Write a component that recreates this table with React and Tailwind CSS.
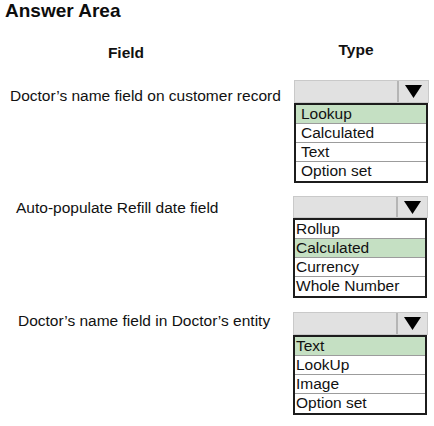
import React from "react";

function Dropdown({ options, selected, textPad, headerH, listOffset }) {
  return (
    <div className={`w-[135px] ${listOffset}`}>
      <div
        className={`flex ${headerH} bg-[#e1e1e1] border border-[#c9c9c9]`}
      >
        <div className="flex-1" />
        <div className="w-[31px] border-l-2 border-[#b5b5b5] flex items-center justify-center">
          <svg width="17" height="13" viewBox="0 0 17 13">
            <polygon points="0,0 17,0 8.5,13" fill="#000" />
          </svg>
        </div>
      </div>
      <div className="border-2 border-[#1c1c1c] w-[134px]">
        {options.map((o, i) => (
          <div
            key={o}
            className={`h-[19px] leading-[17px] ${textPad} text-[#111] ${
              i === selected ? "bg-[#c5e0c3]" : "bg-white"
            } ${i < options.length - 1 ? "border-b border-[#9c9c9c]" : ""}`}
          >
            {o}
          </div>
        ))}
      </div>
    </div>
  );
}

export default function App() {
  return (
    <div
      className="w-[434px] h-[426px] bg-white text-[15.5px] text-[#111]"
      style={{ fontFamily: '"Liberation Sans", Arial, sans-serif' }}
    >
      <div className="pl-[5px] text-[19px] font-bold leading-[21px] text-[#0d0d0d]">
        Answer Area
      </div>
      <div className="mt-[20px] grid grid-cols-[293px_1fr] font-bold leading-[18px]">
        <div className="pt-[3px] text-center w-[252px]">Field</div>
        <div className="w-[134px] text-center pr-[8px]">Type</div>
      </div>

      <div className="mt-[18px] grid grid-cols-[293px_1fr] leading-[18px]">
        <div className="pl-[10px] pt-[7px]">Doctor’s name field on customer record</div>
        <Dropdown
          options={["Lookup", "Calculated", "Text", "Option set"]}
          selected={0}
          textPad="pl-[5px]"
          headerH="h-[23px]"
          listOffset="ml-[1px]"
        />
      </div>

      <div className="mt-[13px] grid grid-cols-[293px_1fr] leading-[18px]">
        <div className="pl-[16px] pt-[3px]">Auto-populate Refill date field</div>
        <Dropdown
          options={["Rollup", "Calculated", "Currency", "Whole Number"]}
          selected={1}
          textPad="pl-[1px]"
          headerH="h-[22px]"
          listOffset="ml-[0px]"
        />
      </div>

      <div className="mt-[14px] grid grid-cols-[293px_1fr] leading-[18px]">
        <div className="pl-[18px] pt-[0px]">Doctor’s name field in Doctor’s entity</div>
        <Dropdown
          options={["Text", "LookUp", "Image", "Option set"]}
          selected={0}
          textPad="pl-[1px]"
          headerH="h-[23px]"
          listOffset="ml-[0px]"
        />
      </div>
    </div>
  );
}
